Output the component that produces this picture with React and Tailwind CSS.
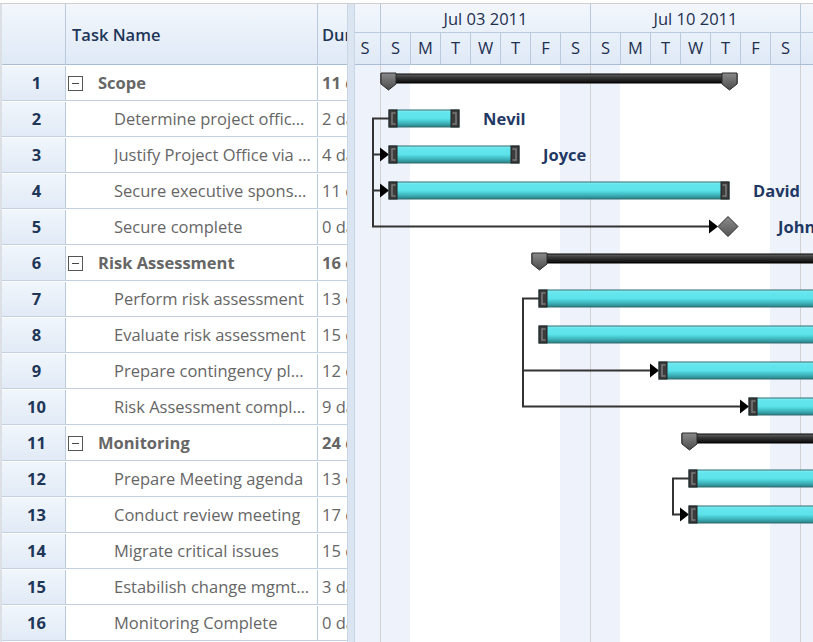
import React from 'react';

// grid rows
const rows = [
  { id: 1, name: 'Scope', dur: '11 days', summary: true },
  { id: 2, name: 'Determine project office scope', dur: '2 days' },
  { id: 3, name: 'Justify Project Office via business model', dur: '4 days' },
  { id: 4, name: 'Secure executive sponsorship', dur: '11 days' },
  { id: 5, name: 'Secure complete', dur: '0 days' },
  { id: 6, name: 'Risk Assessment', dur: '16 days', summary: true },
  { id: 7, name: 'Perform risk assessment', dur: '13 days' },
  { id: 8, name: 'Evaluate risk assessment', dur: '15 days' },
  { id: 9, name: 'Prepare contingency plans', dur: '12 days' },
  { id: 10, name: 'Risk Assessment complete', dur: '9 days' },
  { id: 11, name: 'Monitoring', dur: '24 days', summary: true },
  { id: 12, name: 'Prepare Meeting agenda', dur: '13 days' },
  { id: 13, name: 'Conduct review meeting', dur: '17 days' },
  { id: 14, name: 'Migrate critical issues', dur: '15 days' },
  { id: 15, name: 'Estabilish change mgmt process', dur: '3 days' },
  { id: 16, name: 'Monitoring Complete', dur: '0 days' },
];

// Sat Jul 02 .. Sun Jul 17
const days = ['S', 'S', 'M', 'T', 'W', 'T', 'F', 'S', 'S', 'M', 'T', 'W', 'T', 'F', 'S', 'S'];

const ROW = 36;
const top = (r) => (r - 1) * ROW;
const mid = (r) => top(r) + 17.5;

// body coords: x from page 355, y from page 65
const summaries = [
  { r: 1, x1: 26, x2: 382 },
  { r: 6, x1: 177, x2: 520 },
  { r: 11, x1: 327, x2: 520 },
];
const tasks = [
  { r: 2, x1: 34, x2: 104 },
  { r: 3, x1: 34, x2: 164 },
  { r: 4, x1: 34, x2: 374 },
  { r: 7, x1: 184, x2: 520 },
  { r: 8, x1: 184, x2: 520 },
  { r: 9, x1: 304, x2: 520 },
  { r: 10, x1: 394, x2: 520 },
  { r: 12, x1: 334, x2: 520 },
  { r: 13, x1: 334, x2: 520 },
];
const labels = [
  { r: 2, x: 128, text: 'Nevil' },
  { r: 3, x: 188, text: 'Joyce' },
  { r: 4, x: 398, text: 'David' },
  { r: 5, x: 423, text: 'John' },
];

const Arrow = ({ x, y }) => (
  <polygon points={`${x},${y} ${x - 9},${y - 7} ${x - 9},${y + 7}`} fill="#000" />
);

const SummaryBar = ({ r, x1, x2 }) => {
  const y = top(r) + 9;
  const cap = (cx) => `${cx - 7.5},${y - 1} ${cx + 7.5},${y - 1} ${cx + 7.5},${y + 10} ${cx},${y + 16} ${cx - 7.5},${y + 10}`;
  return (
    <g>
      <rect x={x1} y={y} width={x2 - x1} height={9} fill="url(#sumGrad)" stroke="#000" strokeWidth="1" />
      <polygon points={cap(x1 + 7.5)} fill="url(#capGrad)" stroke="#2a2a2a" strokeWidth="1" />
      {x2 < 500 && <polygon points={cap(x2 - 7.5)} fill="url(#capGrad)" stroke="#2a2a2a" strokeWidth="1" />}
    </g>
  );
};

const TaskBar = ({ r, x1, x2 }) => {
  const y = top(r) + 9;
  return (
    <g>
      <rect x={x1} y={y} width={x2 - x1} height={17} fill="url(#taskGrad)" stroke="#2f6f73" strokeWidth="1" />
      <rect x={x1} y={y} width={8} height={17} fill="#3c3c3c" stroke="#222" strokeWidth="1" />
      <path d={`M${x1 + 6.5} ${y + 3} H${x1 + 3} V${y + 14} H${x1 + 6.5}`} fill="none" stroke="#7a7a7a" strokeWidth="1.5" />
      {x2 < 500 && (
        <g>
          <rect x={x2 - 8} y={y} width={8} height={17} fill="#3c3c3c" stroke="#222" strokeWidth="1" />
          <path d={`M${x2 - 6.5} ${y + 3} H${x2 - 3} V${y + 14} H${x2 - 6.5}`} fill="none" stroke="#7a7a7a" strokeWidth="1.5" />
        </g>
      )}
    </g>
  );
};

function Grid() {
  return (
    <div className="flex flex-col w-[347px] border-l-2 border-[#dcdfe4] shrink-0">
      <div className="flex h-[61px] border-b border-[#a9bdd6] bg-gradient-to-b from-[#f3f7fc] to-[#dfe9f6]">
        <div className="w-[64px] shrink-0 border-r border-[#b9cade]" />
        <div className="w-[252px] shrink-0 border-r border-[#b9cade] flex items-center pl-[6px] pt-[2px] font-semibold text-[#1e3658]">Task Name</div>
        <div className="w-[29px] shrink-0 overflow-hidden whitespace-nowrap flex items-center pl-[4px] pt-[2px] font-semibold text-[#1e3658]">Duration</div>
      </div>
      {rows.map((row) => (
        <div key={row.id} className="flex h-[36px] pt-[1px] border-b border-[#c3d1e4]">
          <div className="w-[64px] shrink-0 border-r border-[#b9cade] bg-gradient-to-b from-[#f1f6fc] to-[#e1eaf6] flex items-center justify-center pl-[6px] font-bold text-[#1e3658]">
            {row.id}
          </div>
          <div className="w-[252px] shrink-0 border-r border-[#b9cade] flex items-center min-w-0 pr-[6px]">
            {row.summary ? (
              <>
                <span className="ml-[2px] w-[15px] h-[15px] border border-[#555] flex items-center justify-center shrink-0">
                  <span className="w-[7px] h-[1px] bg-[#444]" />
                </span>
                <span className="ml-[15px] truncate font-bold text-[#666]">{row.name}</span>
              </>
            ) : (
              <span className="ml-[48px] truncate text-[#666]">{row.name}</span>
            )}
          </div>
          <div className={`w-[29px] shrink-0 overflow-hidden whitespace-nowrap flex items-center pl-[4px] text-[#666] ${row.summary ? 'font-bold' : ''}`}>
            {row.dur}
          </div>
        </div>
      ))}
    </div>
  );
}

function Gantt() {
  return (
    <div className="flex-1 flex flex-col overflow-hidden">
      {/* timescale */}
      <div className="h-[61px] border-b border-[#a9bdd6] bg-gradient-to-b from-[#f3f7fc] to-[#dfe9f6] overflow-hidden">
        <div className="ml-[-5px] flex h-[29px] border-b border-[#b9cade] text-[#1e3050]">
          <div className="w-[30px] shrink-0" />
          <div className="w-[210px] shrink-0 border-l border-[#b9cade] flex items-center justify-center pt-[2px]">Jul 03 2011</div>
          <div className="w-[210px] shrink-0 border-l border-[#b9cade] flex items-center justify-center pt-[2px]">Jul 10 2011</div>
          <div className="w-[210px] shrink-0 border-l border-[#b9cade]" />
        </div>
        <div className="ml-[-5px] flex h-[31px] text-[#1e3050]">
          {days.map((d, i) => (
            <div key={i} className={`w-[30px] shrink-0 flex items-center justify-center ${i > 0 ? 'border-l border-[#b9cade]' : ''}`}>
              {i < 15 ? d : ''}
            </div>
          ))}
        </div>
      </div>
      {/* body */}
      <div className="relative flex-1 overflow-hidden">
        <div className="ml-[-5px] flex h-full">
          {days.map((d, i) => {
            const weekend = i % 7 === 0 || i % 7 === 1;
            const weekStart = i % 7 === 1;
            return (
              <div
                key={i}
                className={`w-[30px] shrink-0 h-full ${weekend ? 'bg-[#eef3fb]' : 'bg-white'} ${weekStart ? 'border-l border-[#d2d2d2]' : ''}`}
              />
            );
          })}
        </div>
        <svg className="absolute left-0 top-0" width="460" height="580">
          <defs>
            <linearGradient id="sumGrad" x1="0" y1="0" x2="0" y2="1">
              <stop offset="0" stopColor="#6a6a6a" />
              <stop offset="0.35" stopColor="#3a3a3a" />
              <stop offset="1" stopColor="#080808" />
            </linearGradient>
            <linearGradient id="capGrad" x1="0" y1="0" x2="0" y2="1">
              <stop offset="0" stopColor="#8a8a8a" />
              <stop offset="1" stopColor="#4a4a4a" />
            </linearGradient>
            <linearGradient id="taskGrad" x1="0" y1="0" x2="0" y2="1">
              <stop offset="0" stopColor="#8aeef3" />
              <stop offset="0.15" stopColor="#66e6ee" />
              <stop offset="0.5" stopColor="#5be2ea" />
              <stop offset="0.75" stopColor="#3fb8be" />
              <stop offset="1" stopColor="#2a7f85" />
            </linearGradient>
            <linearGradient id="msGrad" x1="0" y1="0" x2="0" y2="1">
              <stop offset="0" stopColor="#8c8c8c" />
              <stop offset="1" stopColor="#555" />
            </linearGradient>
          </defs>

          {/* connectors */}
          <g stroke="#333" strokeWidth="2" fill="none">
            <path d={`M34 ${mid(2)} H18 V${mid(5)} H355`} />
            <path d={`M18 ${mid(3)} H26`} />
            <path d={`M18 ${mid(4)} H26`} />
            <path d={`M184 ${mid(7)} H168 V${mid(10)} H386`} />
            <path d={`M168 ${mid(9)} H296`} />
            <path d={`M334 ${mid(12)} H318 V${mid(13)} H326`} />
          </g>
          <Arrow x={34} y={mid(3)} />
          <Arrow x={34} y={mid(4)} />
          <Arrow x={363} y={mid(5)} />
          <Arrow x={304} y={mid(9)} />
          <Arrow x={394} y={mid(10)} />
          <Arrow x={334} y={mid(13)} />

          {summaries.map((s) => <SummaryBar key={s.r} {...s} />)}
          {tasks.map((t) => <TaskBar key={t.r} {...t} />)}

          <polygon
            points={`373,${mid(5) - 10} 383,${mid(5)} 373,${mid(5) + 10} 363,${mid(5)}`}
            fill="url(#msGrad)"
            stroke="#2a2a2a"
            strokeWidth="1"
          />
        </svg>
        {labels.map((l) => (
          <div
            key={l.r}
            className="absolute h-[36px] flex items-center whitespace-nowrap font-bold text-[#1f3864]"
            style={{ left: l.x, top: top(l.r) }}
          >
            {l.text}
          </div>
        ))}
      </div>
    </div>
  );
}

export default function App() {
  return (
    <div className="w-[813px] h-[642px] overflow-hidden bg-white pt-[3px] text-[16.5px]" style={{ fontFamily: '"Segoe UI", "Open Sans", sans-serif' }}>
      <div className="flex h-full border-t border-[#cfcfcf]">
        <Grid />
        <div className="w-[8px] shrink-0 bg-[#dbe5f1] border-l border-[#c9d6e6] border-r border-[#c9d6e6]" />
        <Gantt />
      </div>
    </div>
  );
}
